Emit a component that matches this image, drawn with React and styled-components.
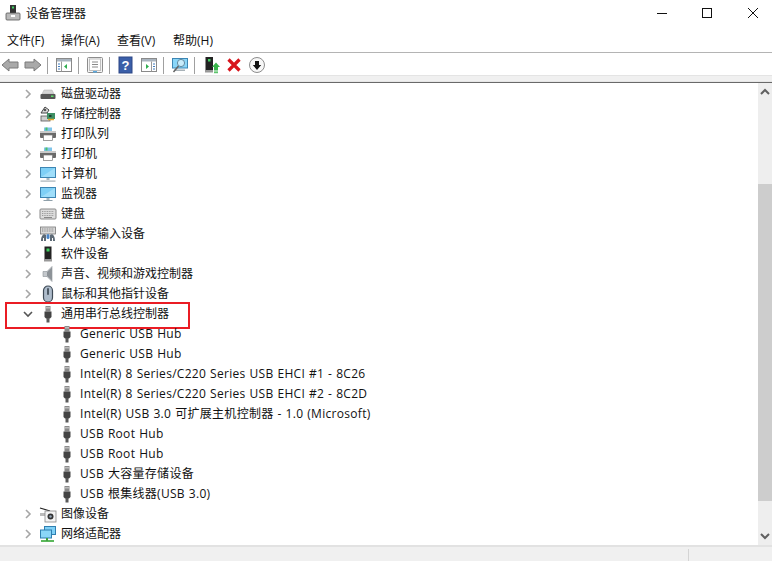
import React from "react";
import styled, { createGlobalStyle } from "styled-components";

const Global = createGlobalStyle`
  html, body { margin: 0; padding: 0; background: #fff; overflow: hidden; }
  #root { width: 772px; height: 561px; }
`;

const Window = styled.div`
  width: 772px; height: 561px; display: flex; flex-direction: column; overflow: hidden;
  background: #fff; color: #111;
  font: 12px/16px "Open Sans", "Noto Sans CJK SC", sans-serif;
`;
const TitleBar = styled.div`height: 30px; display: flex; align-items: flex-start; flex: none;`;
const TitleIcon = styled.svg`width: 16px; height: 18px; margin: 4px 0 0 5px; flex: none;`;
const TitleText = styled.div`margin: 6px 0 0 5px; font-size: 12px; line-height: 16px; flex: 1;`;
const WinBtn = styled.svg`width: 46px; height: 26px; flex: none;`;
const MenuBar = styled.div`
  height: 22px; flex: none; display: flex; gap: 17px; padding: 0 0 0 7px; align-items: center;
  border-bottom: 1px solid #b4b4b4; box-sizing: content-box;
`;
const MenuItem = styled.span`white-space: nowrap; font-size: 12px; width: ${p => p.$w}px;`;
const ToolBar = styled.div`height: 22px; box-sizing: border-box; padding: 2px 0 0 1px; flex: none; display: flex; align-items: center;`;
const ToolIcon = styled.svg`width: 18px; height: 18px; flex: none; margin: 0 0 0 ${p => p.$ml ?? 0}px;`;
const Sep = styled.div`width: 1px; height: 17px; background: #a0a0a0; flex: none; margin: 0 ${p => p.$mr}px 0 5px;`;
const Band = styled.div`height: 7px; flex: none; background: #f0f0f0; border-top: 1px solid #e4e4e4; box-sizing: border-box; border-bottom: 1px solid #e6e6e6;`;
const DarkLine = styled.div`height: 1px; flex: none; background: #696969;`;
const Main = styled.div`flex: 1; display: flex; min-height: 0;`;
const Tree = styled.div`flex: 1; overflow: hidden; min-width: 0; padding-top: 1px;`;
const Row = styled.div`
  height: 20px; display: flex; align-items: center; position: relative; white-space: nowrap;
  padding-left: ${p => (p.$child ? 58 : 21)}px;
`;
const Highlight = styled.div`
  position: absolute; left: 5px; top: -2px; width: 185px; height: 27px;
  border: 2px solid #ea1c24; box-sizing: border-box;
`;
const Chevron = styled.svg`width: 14px; height: 14px; flex: none; margin-right: 4px;`;
const RowIcon = styled.svg`width: 18px; height: 18px; flex: none; margin-right: 4px;`;
const Label = styled.span`
  font-size: 12px;
  letter-spacing: ${p => (p.$child ? 0.3 : 0)}px;
  word-spacing: ${p => (p.$child ? 0.5 : 0)}px;
`;
const Scrollbar = styled.div`width: 14px; flex: none; background: #eeeeee; display: flex; flex-direction: column; align-items: center;`;
const ScrollArrow = styled.svg`width: 14px; height: 17px; flex: none;`;
const TrackTop = styled.div`height: 84px; flex: none;`;
const Thumb = styled.div`height: 317px; width: 14px; flex: none; background: #cdcdcd;`;
const Spacer = styled.div`flex: 1;`;
const StatusBar = styled.div`
  height: 14px; flex: none; background: #f0f0f0; border-top: 2px solid #e2e2e2; box-sizing: content-box;
  display: flex; justify-content: flex-end;
`;
const StatusCell = styled.div`width: 83px; margin-top: 2px; border-left: 1px solid #d4d4d4;`;

const Paths = {
  disk: <>
    <path d="M3 9 L5 5 H13 L15 9 Z" fill="#d4d4d4" stroke="#aaa" strokeWidth=".5" />
    <rect x="1.5" y="9" width="15" height="5" rx="1" fill="#555" />
    <rect x="12" y="10.5" width="2.5" height="1.5" fill="#5fe06a" />
  </>,
  storage: <>
    <path d="M2 8 L6 2 L10 5 L8 8 Z" fill="#dedede" stroke="#444" />
    <circle cx="6" cy="5" r="1.3" fill="#555" />
    <rect x="2" y="11" width="9" height="5" fill="#cfcfcf" stroke="#555" strokeWidth=".8" />
    <rect x="8" y="8" width="8" height="6" fill="#3f8f64" />
    <rect x="10" y="10" width="2.5" height="2" fill="#1e3e30" />
    <path d="M9 14.5h6" stroke="#e5a52a" strokeWidth="1.5" />
  </>,
  printer: <>
    <rect x="5" y="2.5" width="8" height="4" fill="#7fc4ea" />
    <rect x="6.5" y="2.5" width="2" height="3" fill="#4cc06a" />
    <rect x="1" y="6" width="16" height="7" rx="1" fill="#6a6a6a" />
    <rect x="1" y="6" width="16" height="2" fill="#c9c9c9" />
    <rect x="4.5" y="10" width="9" height="5.5" fill="#fff" stroke="#777" strokeWidth=".7" />
  </>,
  monitor: <>
    <rect x="1" y="2" width="16" height="11" fill="#3d86b4" />
    <rect x="2" y="3" width="14" height="9" fill="#7fd0f6" />
    <path d="M2 12 L16 3 V12 Z" fill="#9fdefa" />
    <rect x="7.5" y="13" width="3" height="2" fill="#a8b8c0" />
    <rect x="4.5" y="15" width="9" height="1" fill="#8fa0aa" />
  </>,
  computer: <>
    <rect x="1" y="2" width="16" height="11" fill="#3d86b4" />
    <rect x="2" y="3" width="14" height="9" fill="#7fd0f6" />
    <path d="M2 12 L16 3 V12 Z" fill="#9fdefa" />
    <rect x="7.5" y="13" width="3" height="2" fill="#a8b8c0" />
    <rect x="1.5" y="15.5" width="15" height="1.2" fill="#a8b2b8" />
  </>,
  keyboard: <>
    <rect x="1" y="4" width="16" height="10" rx="1" fill="#dcdcdc" stroke="#8a8a8a" />
    <path d="M3 6.5h12M3 8.5h12M3 10.5h12" stroke="#9a9a9a" strokeDasharray="1 .7" />
    <path d="M5 12.5h8" stroke="#888" />
  </>,
  hid: <>
    <rect x="1.5" y="2" width="15" height="7" fill="#d9d9d9" stroke="#777" strokeWidth=".8" />
    <path d="M3 4h12M3 6h12" stroke="#888" strokeDasharray="1 .7" />
    <path d="M2 16 C2 10 5 8 7 10 V16 H5 V13 H4 V16 Z" fill="#5d6a76" />
    <path d="M16 16 C16 10 13 8 11 10 V16 H13 V13 H14 V16 Z" fill="#5d6a76" />
    <rect x="7.5" y="9" width="3" height="5" rx="1.5" fill="#4a86c8" />
  </>,
  software: <>
    <rect x="5.5" y="1.5" width="7" height="12.5" fill="#222" />
    <rect x="7.5" y="3.5" width="3" height="3" fill="#3fd060" />
    <rect x="5" y="14" width="8" height="2.5" fill="#999" />
  </>,
  sound: <>
    <path d="M4 6.5 H8 L13 1.5 V16.5 L8 11.5 H4 Z" fill="#c4c8cc" stroke="#8a9096" strokeWidth=".6" />
    <path d="M8 7 L13 2.5 V15.5 L8 11Z" fill="#8d9398" />
  </>,
  mouse: <>
    <rect x="4.5" y="1" width="9" height="16" rx="4.5" fill="#aebccb" stroke="#3f4b57" strokeWidth="1.2" />
    <rect x="8" y="3" width="2" height="7" rx="1" fill="#4d5965" />
  </>,
  usb: <>
    <rect x="6.5" y="1" width="5" height="5.5" fill="#8a8a8a" />
    <rect x="7.5" y="2" width="1" height="1.5" fill="#eee" /><rect x="9.5" y="2" width="1" height="1.5" fill="#eee" />
    <path d="M5.5 6.5 H12.5 V12 L11 13.5 H7 L5.5 12 Z" fill="#444" />
    <rect x="7.5" y="13" width="3" height="4.5" fill="#5a5a5a" />
  </>,
  camera: <>
    <path d="M1 3 L11 6" stroke="#222" strokeWidth="1.2" />
    <rect x="1" y="8" width="7" height="3" fill="#bbb" />
    <rect x="6" y="6" width="11" height="11" fill="#f4f4f4" stroke="#888" strokeWidth=".8" />
    <circle cx="11.5" cy="11.5" r="3" fill="#333" />
    <circle cx="11.5" cy="11.5" r="1.2" fill="#9ab" />
  </>,
  network: <>
    <rect x="5" y="1" width="12" height="9" fill="#2f7fb0" />
    <rect x="6" y="2" width="10" height="7" fill="#7fd0f6" />
    <rect x="1" y="4.5" width="12" height="9" fill="#2f7fb0" />
    <rect x="2" y="5.5" width="10" height="7" fill="#8ad6f8" />
    <path d="M2 16 H15" stroke="#5cb85c" strokeWidth="2" />
    <path d="M8 13 V16" stroke="#3fa03f" strokeWidth="2" />
  </>,
};

const Tools = {
  back: <path d="M1 9 L8 3 V6 H17 V12 H8 V15 Z" fill="#a9a9a9" stroke="#7a7a7a" />,
  forward: <path d="M17 9 L10 3 V6 H1 V12 H10 V15 Z" fill="#a9a9a9" stroke="#7a7a7a" />,
  panelL: <>
    <rect x="1.5" y="2.5" width="15" height="13" fill="#fff" stroke="#8a8a8a" />
    <rect x="2" y="3" width="14" height="2.5" fill="#a9b4bf" />
    <path d="M6.5 5.5 V15.5" stroke="#9a9a9a" />
    <path d="M3 8h2M3 10.5h2M3 13h2" stroke="#3f7cc0" />
    <path d="M12 8 V13 L9 10.5 Z" fill="#2fae4f" />
  </>,
  sheet: <>
    <rect x="1.5" y="1.5" width="15" height="15" rx="1" fill="#f4f4f4" stroke="#8d8d8d" />
    <rect x="3.5" y="3" width="11" height="11.5" fill="#fff" stroke="#c0c0c0" />
    <path d="M6 6h6M6 8.5h6M6 11h6" stroke="#8a8a8a" />
    <rect x="7" y="15" width="4" height="1.5" fill="#5aa9e0" />
  </>,
  help: <>
    <rect x="2" y="1" width="13" height="16" fill="#3a5ea8" stroke="#2c4685" />
    <text x="8.5" y="14" textAnchor="middle" fontSize="13" fontWeight="700" fill="#fff" fontFamily="Liberation Sans">?</text>
  </>,
  panelR: <>
    <rect x="1.5" y="2.5" width="15" height="13" fill="#fff" stroke="#8a8a8a" />
    <rect x="2" y="3" width="14" height="2.5" fill="#a9b4bf" />
    <path d="M11.5 5.5 V15.5" stroke="#9a9a9a" />
    <path d="M13 8h2M13 10.5h2M13 13h2" stroke="#3f7cc0" />
    <path d="M6 8 V13 L9 10.5 Z" fill="#2fae4f" />
  </>,
  scan: <>
    <rect x="1" y="2" width="16" height="10.5" fill="#3d86b4" />
    <rect x="2" y="3" width="14" height="8.5" fill="#8ad6f8" />
    <rect x="3" y="13.5" width="11" height="1.5" fill="#a8b2b8" />
    <circle cx="10" cy="7" r="3.6" fill="#c9ecfb" stroke="#5a7f95" strokeWidth=".9" />
    <path d="M7.5 10 L2.5 16" stroke="#666" strokeWidth="1.5" />
  </>,
  update: <>
    <rect x="2.5" y="1" width="7.5" height="13" fill="#222" />
    <rect x="5" y="3" width="2.5" height="2.5" fill="#3fd060" />
    <rect x="2" y="14" width="8" height="2.5" fill="#999" />
    <path d="M13 6.5 L17 11 H15 V14 H11 V11 H9 Z" fill="#38b54a" />
    <path d="M11 15h4M11 16.7h4" stroke="#38b54a" />
  </>,
  remove: <path d="M3.5 3.5 L14.5 14.5 M14.5 3.5 L3.5 14.5" stroke="#d8141c" strokeWidth="3.2" />,
  install: <>
    <circle cx="9" cy="9" r="7.5" fill="#f7f7f7" stroke="#8d8d8d" />
    <path d="M9 14 L4.8 9 H7 V5 H11 V9 H13.2 Z" fill="#111" />
  </>,
};

const Item = ({ name, ...rest }) => <ToolIcon viewBox="0 0 18 18" {...rest}>{Tools[name]}</ToolIcon>;

const categoriesTop = [
  ["disk", "磁盘驱动器"], ["storage", "存储控制器"], ["printer", "打印队列"], ["printer", "打印机"],
  ["computer", "计算机"], ["monitor", "监视器"], ["keyboard", "键盘"], ["hid", "人体学输入设备"],
  ["software", "软件设备"], ["sound", "声音、视频和游戏控制器"], ["mouse", "鼠标和其他指针设备"],
];
const children = [
  "Generic USB Hub", "Generic USB Hub", "Intel(R) 8 Series/C220 Series USB EHCI #1 - 8C26",
  "Intel(R) 8 Series/C220 Series USB EHCI #2 - 8C2D", "Intel(R) USB 3.0 可扩展主机控制器 - 1.0 (Microsoft)",
  "USB Root Hub", "USB Root Hub", "USB 大容量存储设备", "USB 根集线器(USB 3.0)",
];
const categoriesBottom = [["camera", "图像设备"], ["network", "网络适配器"]];

const Category = ({ icon, label, open }) => (
  <Row>
    {open && <Highlight />}
    <Chevron viewBox="0 0 14 14">
      {open
        ? <path d="M3 5 L7 9 L11 5" fill="none" stroke="#555" strokeWidth="1.6" />
        : <path d="M5 3 L9 7 L5 11" fill="none" stroke="#a6a6a6" strokeWidth="1.6" />}
    </Chevron>
    <RowIcon viewBox="0 0 18 18">{Paths[icon]}</RowIcon>
    <Label>{label}</Label>
  </Row>
);

export default function App() {
  return (
    <Window>
      <Global />
      <TitleBar>
        <TitleIcon viewBox="0 0 16 18">
          <rect x="5" y="1" width="6" height="8" fill="#333" />
          <rect x="7" y="2.5" width="2" height="2" fill="#3fd060" />
          <rect x="1" y="9" width="14" height="7" rx="1" fill="#b9b9b9" stroke="#555" strokeWidth=".8" />
          <rect x="6" y="11" width="4" height="2" fill="#fff" />
        </TitleIcon>
        <TitleText>设备管理器</TitleText>
        <WinBtn viewBox="0 0 46 26"><path d="M23 13.5 H33" stroke="#111" /></WinBtn>
        <WinBtn viewBox="0 0 46 26"><rect x="22.5" y="8.5" width="9" height="9" fill="none" stroke="#111" /></WinBtn>
        <WinBtn viewBox="0 0 46 26"><path d="M22 8 L32 18 M32 8 L22 18" stroke="#111" /></WinBtn>
      </TitleBar>
      <MenuBar>
        <MenuItem $w={37}>文件(F)</MenuItem>
        <MenuItem $w={39}>操作(A)</MenuItem>
        <MenuItem $w={39}>查看(V)</MenuItem>
        <MenuItem $w={41}>帮助(H)</MenuItem>
      </MenuBar>
      <ToolBar>
        <Item name="back" />
        <Item name="forward" $ml={5} />
        <Sep $mr={7} />
        <Item name="panelL" />
        <Sep $mr={7} />
        <Item name="sheet" />
        <Sep $mr={7} />
        <Item name="help" />
        <Item name="panelR" $ml={5} />
        <Sep $mr={7} />
        <Item name="scan" />
        <Sep $mr={8} />
        <Item name="update" />
        <Item name="remove" $ml={4} />
        <Item name="install" $ml={5} />
      </ToolBar>
      <Band />
      <DarkLine />
      <Main>
        <Tree>
          {categoriesTop.map(([i, l]) => <Category key={l} icon={i} label={l} />)}
          <Category icon="usb" label="通用串行总线控制器" open />
          {children.map((c, i) => (
            <Row key={i} $child>
              <RowIcon viewBox="0 0 18 18">{Paths.usb}</RowIcon>
              <Label $child>{c}</Label>
            </Row>
          ))}
          {categoriesBottom.map(([i, l]) => <Category key={l} icon={i} label={l} />)}
        </Tree>
        <Scrollbar>
          <ScrollArrow viewBox="0 0 14 17"><path d="M3 11 L7 7 L11 11" fill="none" stroke="#606060" strokeWidth="2" /></ScrollArrow>
          <TrackTop />
          <Thumb />
          <Spacer />
          <ScrollArrow viewBox="0 0 14 17"><path d="M3 6 L7 10 L11 6" fill="none" stroke="#606060" strokeWidth="2" /></ScrollArrow>
        </Scrollbar>
      </Main>
      <StatusBar><StatusCell /></StatusBar>
    </Window>
  );
}
